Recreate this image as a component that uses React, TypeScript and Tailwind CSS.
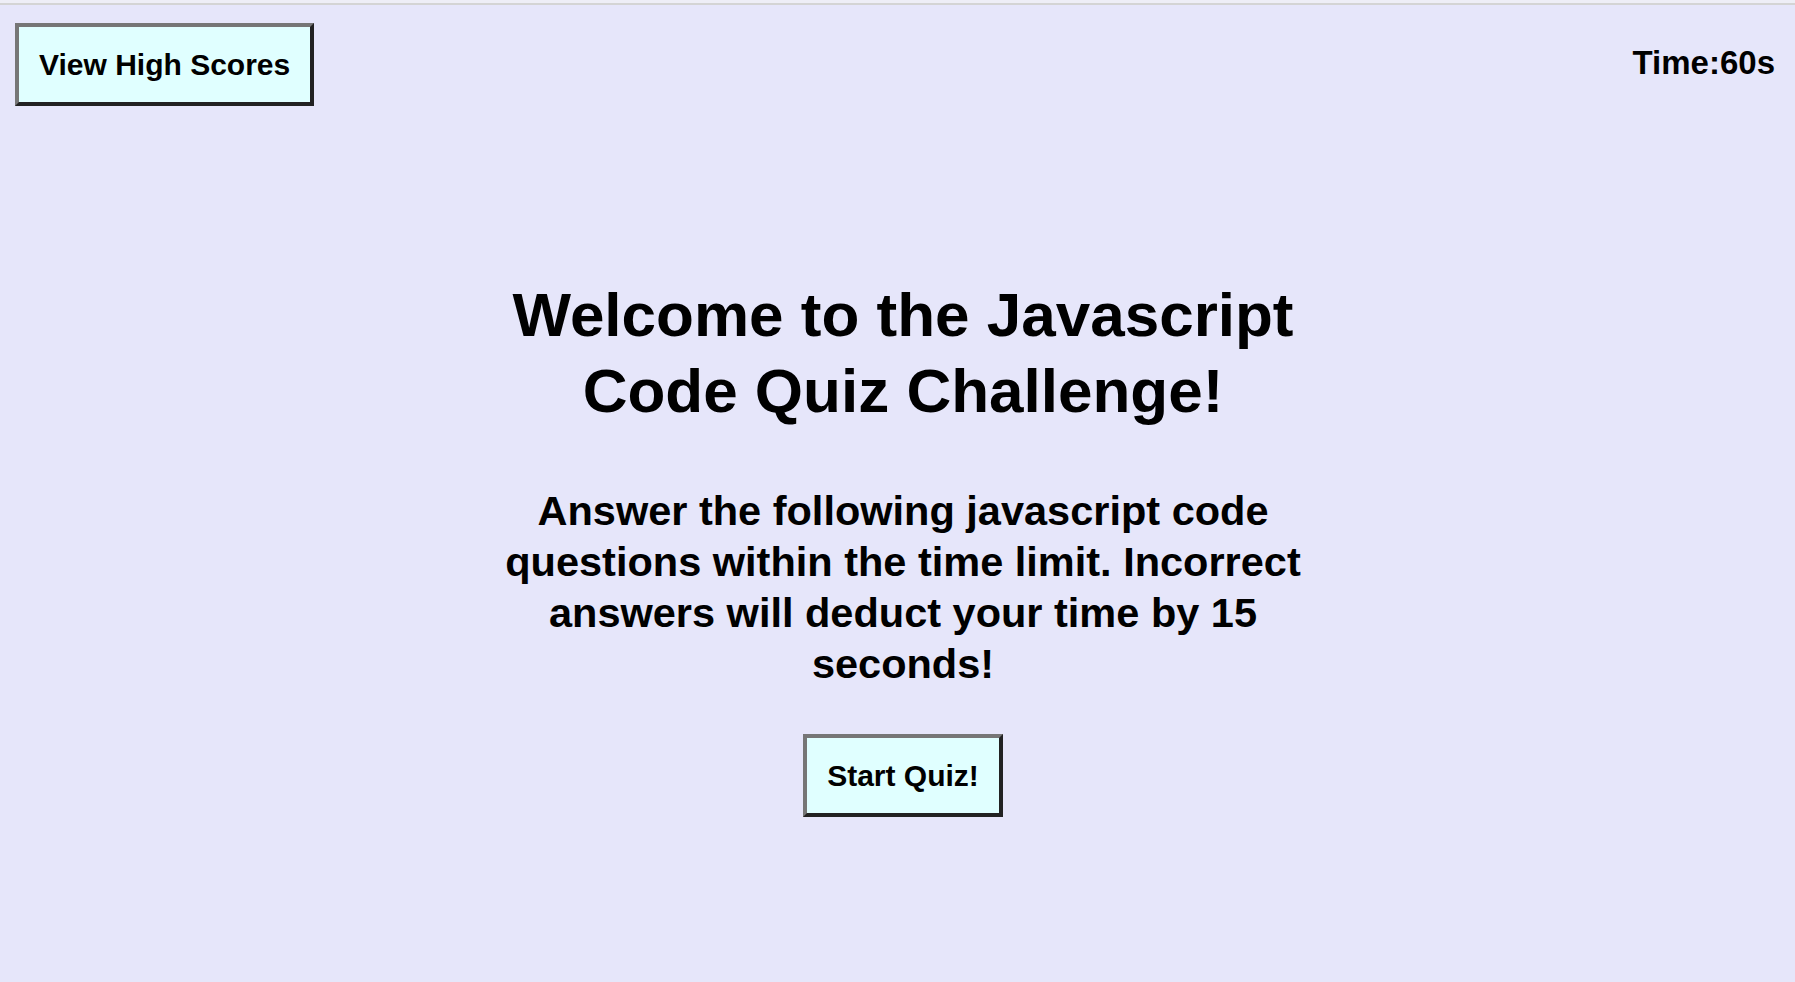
export default function App() {
  return (
    <div className="min-h-screen bg-[#e6e6fa] font-['Liberation_Sans',Arial,sans-serif] text-black">
      <div className="h-[3px] bg-[#eeeef6]" />
      <div className="h-[2px] bg-[#d4d4d4]" />

      <header className="flex items-start justify-between pl-[15px] pr-[20px] pt-[18px]">
        <button className="border-4 border-t-[#767676] border-l-[#767676] border-b-[#222] border-r-[#222] bg-[#e0ffff] px-[20px] pt-[21px] pb-[20px] text-[30px] font-bold leading-[34px]">
          View High Scores
        </button>
        <div className="mt-[21px] text-[33px] font-bold leading-[37px]">Time:60s</div>
      </header>

      <main className="flex justify-center pl-[11px] pt-[171px]">
        <div className="flex w-[840px] flex-col items-center text-center">
          <h1 className="text-[62px] font-bold leading-[76px]">
            Welcome to the Javascript Code Quiz Challenge!
          </h1>
          <p className="mt-[56px] text-[41.5px] font-bold leading-[51px]">
            Answer the following javascript code questions within the time limit. Incorrect answers will deduct your time by 15 seconds!
          </p>
          <button className="mt-[45px] border-4 border-t-[#767676] border-l-[#767676] border-b-[#222] border-r-[#222] bg-[#e0ffff] px-[20px] pt-[21px] pb-[20px] text-[30px] font-bold leading-[34px]">
            Start Quiz!
          </button>
        </div>
      </main>
    </div>
  );
}
